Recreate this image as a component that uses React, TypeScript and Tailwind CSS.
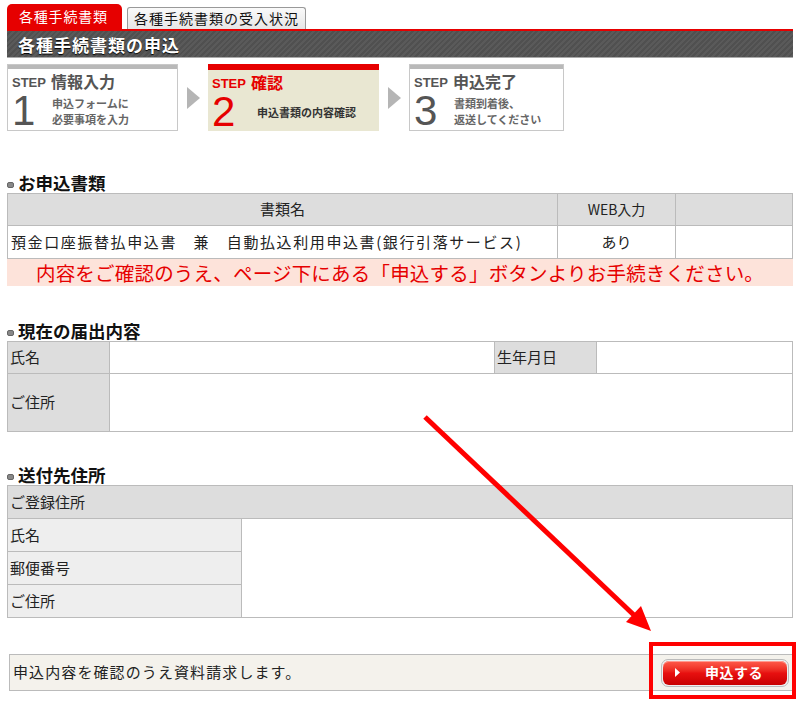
import React from "react";

type Step = {
	no: string;
	title: string;
	lines: string[];
	active?: boolean;
	width: string;
};

const steps: Step[] = [
	{ no: "1", title: "情報入力", lines: ["申込フォームに", "必要事項を入力"], width: "w-[171px]" },
	{ no: "2", title: "確認", lines: ["申込書類の内容確認"], active: true, width: "w-[171px]" },
	{ no: "3", title: "申込完了", lines: ["書類到着後、", "返送してください"], width: "w-[155px]" },
];

function StepBox({ step }: { step: Step }) {
	const on = step.active;
	return (
		<div
			className={`${step.width} h-[67px] flex flex-col ${
				on ? "bg-[#e9e7d2]" : "bg-white border border-[#c8c8c8]"
			}`}
		>
			<div className={on ? "h-[6px] bg-[#e60000]" : "h-[4px] bg-[#b9b9b9]"} />
			<div className="flex items-end gap-[5px] pl-[4px] pt-[3px] h-[20px] leading-none">
				<span className={`text-[13px] font-bold ${on ? "text-[#e60000]" : "text-[#555]"} font-['Liberation_Sans',sans-serif]`}>
					STEP
				</span>
				<span className={`text-[16px] font-bold ${on ? "text-[#e60000]" : "text-[#555]"}`}>{step.title}</span>
			</div>
			<div className="flex items-center pl-[4px] mt-[3px]">
				<span
					className={`w-[36px] text-[42px] leading-[38px] font-light font-['Liberation_Sans',sans-serif] ${
						on ? "text-[#e60000]" : "text-[#555]"
					}`}
				>
					{step.no}
				</span>
				<div className={`text-[11px] leading-[16px] font-bold ${on ? "text-[#333]" : "text-[#666]"} ${on ? "pl-[9px]" : "pl-[4px]"}`}>
					{step.lines.map((l) => (
						<div key={l}>{l}</div>
					))}
				</div>
			</div>
		</div>
	);
}

function StepArrow() {
	return (
		<div className="w-[30px] flex justify-center">
			<svg width="13" height="22" viewBox="0 0 13 22">
				<polygon points="0,0 13,11 0,22" fill="#b5b5b5" />
			</svg>
		</div>
	);
}

function Heading({ children }: { children: React.ReactNode }) {
	return (
		<div className="flex items-center gap-[4px] h-[20px] text-[17.5px] font-bold text-[#111] leading-none">
			<span className="w-[7px] h-[6px] rounded-[2px] bg-[#888] border border-[#666] mt-[3px]" />
			{children}
		</div>
	);
}

export default function App() {
	return (
		<div className="relative w-[800px] h-[708px] bg-white font-['Noto_Sans_CJK_JP',sans-serif] text-[#222] px-[7px] pt-[4px] overflow-hidden">
			{/* タブ */}
			<div className="flex items-end gap-[5px] h-[25px]">
				<div className="w-[115px] h-[25px] rounded-t-[5px] bg-[#e60000] text-white text-[14px] leading-[25px] pl-[12px] tracking-[0.8px]">
					各種手続書類
				</div>
				<div className="w-[179px] h-[22px] rounded-t-[3px] border border-b-0 border-[#999] bg-gradient-to-b from-[#fafafa] to-[#e6e6e6] text-[14px] leading-[20px] pl-[6px] tracking-[1px] text-[#111]">
					各種手続書類の受入状況
				</div>
			</div>
			<div className="h-[2px] bg-[#e60000]" />
			<div className="h-[27px] bg-[#555] bg-[repeating-linear-gradient(135deg,#5a5a5a_0px,#5a5a5a_2px,#505050_2px,#505050_4px)] border-b border-[#aaa] text-white text-[17px] font-bold leading-[27px] pl-[11px] tracking-[1px] [text-shadow:0_1px_1px_#000]">
				各種手続書類の申込
			</div>

			{/* ステップ */}
			<div className="flex items-center mt-[6px]">
				<StepBox step={steps[0]} />
				<StepArrow />
				<StepBox step={steps[1]} />
				<StepArrow />
				<StepBox step={steps[2]} />
			</div>

			{/* お申込書類 */}
			<div className="mt-[42px]">
				<Heading>お申込書類</Heading>
				<div className="border border-[#bbb] text-[15px]">
					<div className="flex h-[32px] bg-[#ddd] border-b border-[#bbb]">
						<div className="w-[550px] flex items-center justify-center border-r border-[#bbb]">書類名</div>
						<div className="w-[118px] flex items-center justify-center border-r border-[#bbb] text-[14px]">WEB入力</div>
						<div className="flex-1" />
					</div>
					<div className="flex h-[32px] bg-white">
						<div className="w-[550px] flex items-center pl-[3px] border-r border-[#bbb] tracking-[1.6px]">
							預金口座振替払申込書　兼　自動払込利用申込書(銀行引落サービス)
						</div>
						<div className="w-[118px] flex items-center justify-center border-r border-[#bbb]">あり</div>
						<div className="flex-1" />
					</div>
				</div>
				<div className="h-[27px] bg-[#fde3da] text-[#e60000] text-[19.5px] leading-[27px] text-center tracking-[0.2px]">
					内容をご確認のうえ、ページ下にある「申込する」ボタンよりお手続きください。
				</div>
			</div>

			{/* 現在の届出内容 */}
			<div className="mt-[35px]">
				<Heading>現在の届出内容</Heading>
				<div className="border border-[#bbb] text-[15px]">
					<div className="flex h-[32px] border-b border-[#bbb]">
						<div className="w-[102px] bg-[#ddd] border-r border-[#bbb] flex items-center pl-[2px]">氏名</div>
						<div className="w-[384px] bg-white" />
						<div className="w-[103px] bg-[#ddd] border-x border-[#bbb] flex items-center pl-[2px]">生年月日</div>
						<div className="flex-1 bg-white" />
					</div>
					<div className="flex h-[57px]">
						<div className="w-[102px] bg-[#ddd] border-r border-[#bbb] flex items-center pl-[2px]">ご住所</div>
						<div className="flex-1 bg-white" />
					</div>
				</div>
			</div>

			{/* 送付先住所 */}
			<div className="mt-[33px]">
				<Heading>送付先住所</Heading>
				<div className="border border-[#bbb] text-[15px]">
					<div className="h-[33px] bg-[#ddd] border-b border-[#bbb] flex items-center pl-[2px]">ご登録住所</div>
					<div className="flex">
						<div className="w-[234px] border-r border-[#bbb]">
							<div className="h-[33px] bg-[#eee] border-b border-[#bbb] flex items-center pl-[2px]">氏名</div>
							<div className="h-[33px] bg-[#eee] border-b border-[#bbb] flex items-center pl-[2px]">郵便番号</div>
							<div className="h-[32px] bg-[#eee] flex items-center pl-[2px]">ご住所</div>
						</div>
						<div className="flex-1 bg-white" />
					</div>
				</div>
			</div>

			{/* 申込ボタン */}
			<div className="mt-[36px] ml-[2px] h-[37px] border border-[#bbb] bg-[#f4f2ec] flex items-center justify-between pl-[3px] pr-[3px]">
				<span className="text-[15px] text-[#222] tracking-[1.1px]">申込内容を確認のうえ資料請求します。</span>
				<button
					type="button"
					className="w-[128px] h-[28px] rounded-[7px] border border-[#bbb] bg-[#eee] p-[1px]"
				>
					<span className="flex items-center h-full rounded-[6px] bg-gradient-to-b from-[#ff5a4a] via-[#e81010] to-[#c80000] shadow-[inset_0_1px_0_#ff9a90] text-white text-[14px] font-bold pl-[12px] tracking-[0.5px]">
						<svg width="5" height="9" viewBox="0 0 5 9" className="mr-[25px]">
							<polygon points="0,0 5,4.5 0,9" fill="#fff" />
						</svg>
						申込する
					</span>
				</button>
			</div>

			{/* 注釈 */}
			<div className="absolute left-[649px] top-[642px] w-[147px] h-[57px] border-[4px] border-[#ff0000]" />
			<svg className="absolute left-0 top-0" width="800" height="708" viewBox="0 0 800 708">
				<line x1="425" y1="417" x2="636" y2="617" stroke="#ff0000" strokeWidth="5" />
				<polygon points="651,631 626,622 641,606" fill="#ff0000" />
			</svg>
		</div>
	);
}
